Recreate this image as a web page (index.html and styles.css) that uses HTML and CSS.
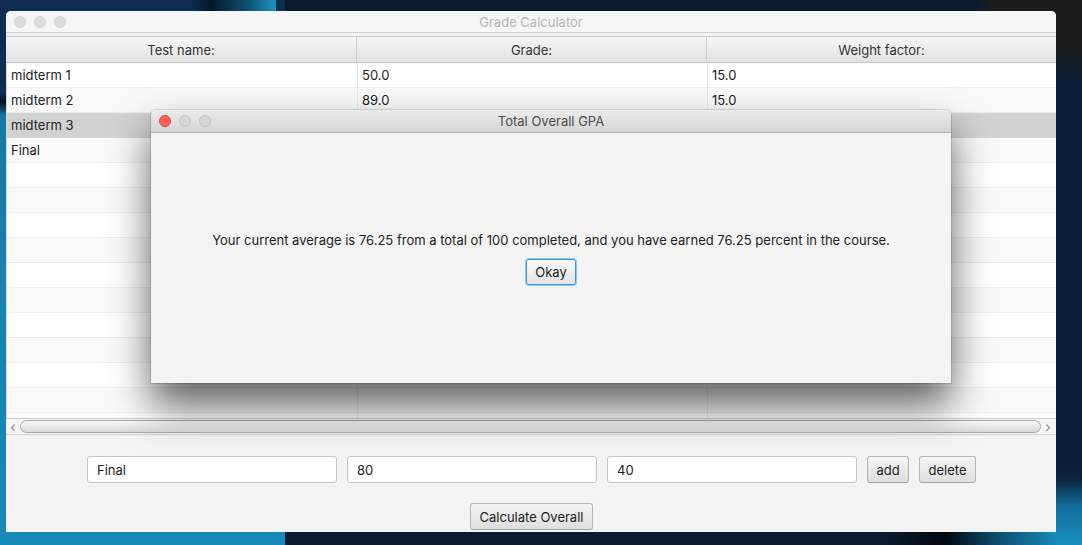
FILE: index.html
```html
<!DOCTYPE html>
<html>
<head>
<meta charset="utf-8">
<title>Grade Calculator</title>
<link rel="stylesheet" href="styles.css">
</head>
<body>
<div class="desktop">
  <div class="window main">
    <div class="titlebar">
      <div class="lights">
        <span class="light grey"></span><span class="light grey"></span><span class="light grey"></span>
      </div>
      <div class="title inactive">Grade Calculator</div>
    </div>
    <div class="table">
      <div class="thead">
        <div class="th">Test name:</div>
        <div class="th">Grade:</div>
        <div class="th">Weight factor:</div>
      </div>
      <div class="tbody">
        <div class="tr"><div class="td">midterm 1</div><div class="td">50.0</div><div class="td">15.0</div></div>
        <div class="tr odd"><div class="td">midterm 2</div><div class="td">89.0</div><div class="td">15.0</div></div>
        <div class="tr selected"><div class="td">midterm 3</div><div class="td"></div><div class="td"></div></div>
        <div class="tr odd"><div class="td">Final</div><div class="td"></div><div class="td"></div></div>
        <div class="tr"><div class="td"></div><div class="td"></div><div class="td"></div></div>
        <div class="tr odd"><div class="td"></div><div class="td"></div><div class="td"></div></div>
        <div class="tr"><div class="td"></div><div class="td"></div><div class="td"></div></div>
        <div class="tr odd"><div class="td"></div><div class="td"></div><div class="td"></div></div>
        <div class="tr"><div class="td"></div><div class="td"></div><div class="td"></div></div>
        <div class="tr odd"><div class="td"></div><div class="td"></div><div class="td"></div></div>
        <div class="tr"><div class="td"></div><div class="td"></div><div class="td"></div></div>
        <div class="tr odd"><div class="td"></div><div class="td"></div><div class="td"></div></div>
        <div class="tr"><div class="td"></div><div class="td"></div><div class="td"></div></div>
        <div class="tr odd"><div class="td"></div><div class="td"></div><div class="td"></div></div>
        <div class="tr"><div class="td"></div><div class="td"></div><div class="td"></div></div>
      </div>
      <div class="hscroll">
        <span class="arrow">&lsaquo;</span>
        <div class="thumb"></div>
        <span class="arrow">&rsaquo;</span>
      </div>
    </div>
    <div class="controls">
      <div class="inputs">
        <div class="field">Final</div>
        <div class="field">80</div>
        <div class="field">40</div>
        <button class="btn add">add</button>
        <button class="btn del">delete</button>
      </div>
      <button class="btn calc">Calculate Overall</button>
    </div>
  </div>

  <div class="window dialog">
    <div class="titlebar active">
      <div class="lights">
        <span class="light red"></span><span class="light grey"></span><span class="light grey"></span>
      </div>
      <div class="title">Total Overall GPA</div>
    </div>
    <div class="dialog-body">
      <p class="message">Your current average is 76.25 from a total of 100 completed, and you have earned 76.25 percent in the course.</p>
      <button class="btn okay">Okay</button>
    </div>
  </div>
</div>
</body>
</html>
```

FILE: styles.css
```css
* { box-sizing: border-box; }

html, body {
  margin: 0;
  padding: 0;
}

body {
  width: 1082px;
  height: 545px;
  overflow: hidden;
  font-family: Inter, "Liberation Sans", Arial, sans-serif;
  font-size: 13px;
  color: #222;
}

.desktop {
  position: relative;
  width: 1082px;
  height: 545px;
  background:
    linear-gradient(to right, #0f2d52 0, #06172a 25%, #0f5576 70%, #1b96c4 100%) 190px 0 / 86px 11px no-repeat,
    linear-gradient(to right, #0a1a30 0, #1c1c1c 15px, #1c1c1c 100%) 975px 0 / 107px 11px no-repeat,
    linear-gradient(to bottom, #1c1c1c 0, #1c1c1c 50px, #0a1d36 80px, #0b1f3a 465px, #08243e 480px, #136b98 505px, #1a90c0 545px) 1056px 0 / 26px 545px no-repeat,
    linear-gradient(to right, #0a1b30 0, #0a1b30 30px, #02080f 90px, #0d4a6d 140px, #1789b8 200px, #1a8fbf 100%) 855px 532px / 227px 13px no-repeat,
    linear-gradient(to bottom, #0f2d52 0, #0f2d52 92px, #04111e 102px, #127aa6 116px, #1683b2 300px, #1789b9 100%) 0 0 / 285px 545px no-repeat,
    #0a1b30;
}

/* ---------- windows ---------- */
.window {
  position: absolute;
  background: #f3f3f3;
  border-radius: 5px 5px 0 0;
  overflow: hidden;
}

.main {
  left: 6px;
  top: 11px;
  width: 1050px;
  height: 521px;
  display: flex;
  flex-direction: column;
}

.titlebar {
  position: relative;
  height: 22px;
  flex: none;
  background: #f6f6f6;
  border-bottom: 1px solid #cfcfcf;
  display: flex;
  align-items: center;
  justify-content: center;
}

.titlebar.active {
  height: 23px;
  background: linear-gradient(to bottom, #ebebeb, #d5d5d5);
  border-bottom: 1px solid #b1b1b1;
}

.lights {
  position: absolute;
  left: 8px;
  top: 5px;
  display: flex;
  gap: 8px;
}

.light {
  width: 12px;
  height: 12px;
  border-radius: 50%;
  display: block;
}

.light.grey {
  background: #dcdcdc;
  border: 1px solid #d0d0d0;
}

.titlebar.active .light.grey {
  background: #d6d6d6;
  border-color: #c2c2c2;
}

.light.red {
  background: #fc5f57;
  border: 1px solid #de4640;
}

.title {
  font-size: 13px;
  color: #4c4c4c;
  line-height: 16px;
}

.title.inactive {
  color: #b4b4b4;
}

/* ---------- table ---------- */
.table {
  margin-top: 3px;
  border-top: 1px solid #c9c9c9;
  background: #fff;
  flex: none;
}

.thead, .tr {
  display: grid;
  grid-template-columns: 351px 350px 1fr;
}

.thead {
  height: 26px;
  background: linear-gradient(to bottom, #f6f6f6, #e2e2e2);
  border-bottom: 1px solid #c4c4c4;
}

.th {
  border-right: 1px solid #cdcdcd;
  display: flex;
  align-items: center;
  justify-content: center;
  color: #333;
}

.th:last-child, .td:last-child { border-right: none; }

.tbody {
  height: 355px;
  overflow: hidden;
  border-left: 1px solid #d9d9d9;
}

.tr {
  height: 25px;
  background: #fff;
  border-bottom: 1px solid #ededed;
}

.tr.odd { background: #f9f9f9; }
.tr.selected { background: #d2d2d2; border-bottom-color: #d2d2d2; }

.td {
  border-right: 1px solid #e9e9e9;
  padding-left: 4px;
  display: flex;
  align-items: center;
  color: #222;
}

.hscroll {
  height: 17px;
  background: #f4f4f4;
  border-top: 1px solid #d0d0d0;
  border-bottom: 1px solid #d4d4d4;
  display: flex;
  align-items: center;
  padding: 0 3px 0 2px;
  gap: 2px;
}

.arrow {
  width: 10px;
  text-align: center;
  color: #8a8a8a;
  font-size: 14px;
  line-height: 14px;
}

.thumb {
  flex: 1;
  height: 13px;
  border: 1px solid #a9a9a9;
  border-radius: 7px;
  background: linear-gradient(to bottom, #f8f8f8, #dadada);
}

/* ---------- controls ---------- */
.controls {
  flex: 1;
  display: flex;
  flex-direction: column;
  align-items: center;
  padding-top: 21px;
  gap: 20px;
}

.inputs {
  display: flex;
  gap: 10px;
  margin-left: 1px;
}

.field {
  width: 250px;
  height: 27px;
  background: #fff;
  border: 1px solid #c5c5c5;
  border-radius: 3px;
  padding-left: 9px;
  display: flex;
  align-items: center;
  color: #222;
}

.btn {
  font-family: Inter, "Liberation Sans", Arial, sans-serif;
  font-size: 13px;
  color: #222;
  height: 27px;
  padding: 0 9px;
  background: linear-gradient(to bottom, #f5f5f5, #dedede);
  border: 1px solid #b4b4b4;
  border-bottom-color: #a4a4a4;
  border-radius: 3px;
}

.add { width: 42px; padding: 0; }
.del { width: 57px; padding: 0; }
.calc { width: 123px; padding: 0; margin-left: 1px; }

/* ---------- dialog ---------- */
.dialog {
  left: 151px;
  top: 110px;
  width: 800px;
  height: 273px;
  box-shadow: 0 22px 40px rgba(0, 0, 0, 0.62), 0 0 0 1px rgba(0, 0, 0, 0.12);
  display: flex;
  flex-direction: column;
}

.dialog-body {
  flex: 1;
  display: flex;
  flex-direction: column;
  align-items: center;
  justify-content: center;
  gap: 11px;
  padding-top: 1px;
}

.message {
  margin: 0;
  line-height: 16px;
  color: #222;
}

.okay {
  width: 50px;
  height: 26px;
  padding: 0;
  border: 1px solid #3d9ad8;
  box-shadow: 0 0 0 1px #8cc4ec;
  background: linear-gradient(to bottom, #fafafa, #e3e3e3);
}
```
